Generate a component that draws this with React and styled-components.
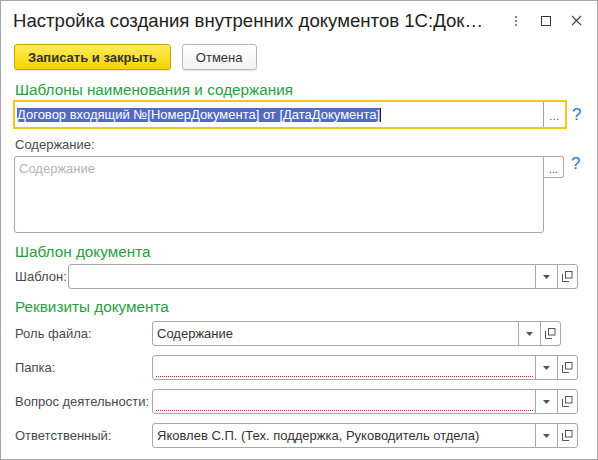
import React from 'react'
import styled, { createGlobalStyle } from 'styled-components'

const GlobalStyle = createGlobalStyle`
	html, body {
		margin: 0;
		padding: 0;
		background: #fff;
	}
	body {
		font-family: "Liberation Sans", Arial, sans-serif;
		font-size: 13px;
		color: #333;
	}
	* {
		box-sizing: border-box;
	}
`

const Window = styled.div`
	width: 598px;
	height: 460px;
	border: 1px solid #a5a5a5;
	background: #fff;
	display: flex;
	flex-direction: column;
	overflow: hidden;
`

const TitleBar = styled.div`
	height: 39px;
	display: flex;
	align-items: center;
	padding: 0 0 0 12px;
`

const Title = styled.div`
	flex: 1;
	font-size: 18.6px;
	color: #222;
	white-space: nowrap;
	padding-top: 1px;
`

const TitleButton = styled.div`
	width: 30px;
	height: 30px;
	display: flex;
	align-items: center;
	justify-content: center;
	color: #555;
`

const Toolbar = styled.div`
	display: flex;
	gap: 11px;
	padding: 4px 0 0 13px;
`

const Button = styled.button`
	height: 26px;
	padding: 0 13px;
	border-radius: 3px;
	font-family: inherit;
	font-size: 13px;
	font-weight: ${p => (p.$primary ? 'bold' : 'normal')};
	color: #333;
	border: 1px solid ${p => (p.$primary ? '#c9a400' : '#b8b8b8')};
	background: ${p =>
		p.$primary
			? 'linear-gradient(to bottom, #ffec5c, #f6d400)'
			: 'linear-gradient(to bottom, #ffffff, #f2f2f2)'};
	box-shadow: 0 1px 1px rgba(0, 0, 0, 0.12);
`

const Content = styled.div`
	padding: 0 0 0 13px;
	display: flex;
	flex-direction: column;
`

const Heading = styled.div`
	font-size: 15.3px;
	line-height: 20px;
	color: #27a040;
	margin-top: ${p => p.$top}px;
	padding-left: 1px;
`

const Line = styled.div`
	display: flex;
	align-items: ${p => (p.$top ? 'flex-start' : 'center')};
	margin-top: ${p => p.$mt || 0}px;
`

const FocusBox = styled.div`
	width: 554px;
	height: 29px;
	margin-left: -1px;
	border: 2px solid #f5c518;
	display: flex;
	align-items: stretch;
`

const InputText = styled.div`
	flex: 1;
	display: flex;
	align-items: center;
	padding-left: 2px;
	white-space: nowrap;
	overflow: hidden;
`

const Selected = styled.span`
	background: #5468c6;
	color: #fff;
	line-height: 14px;
	border-right: 1px solid #222;
`

const DotsButton = styled.div`
	width: ${p => p.$w}px;
	display: flex;
	align-items: center;
	justify-content: center;
	color: #444;
	font-size: 11px;
	letter-spacing: 0.5px;
	border-left: 1px solid #a0a0a0;
	padding-top: 3px;
`

const Help = styled.div`
	color: #2478c4;
	font-size: 17px;
	margin-left: ${p => p.$ml}px;
	margin-top: ${p => p.$mt || 0}px;
`

const Label = styled.div`
	width: ${p => p.$w}px;
	line-height: 16px;
	color: #4a4a4a;
	padding-left: 1px;
	white-space: nowrap;
`

const TextArea = styled.div`
	width: 530px;
	height: 77px;
	border: 1px solid #a8a8a8;
	border-radius: 3px 0 3px 3px;
	padding: 5px 4px;
	color: #b4b4b4;
	line-height: 14px;
`

const SideButton = styled.div`
	width: 20px;
	height: 22px;
	border: 1px solid #a8a8a8;
	border-left: none;
	border-radius: 0 3px 3px 0;
	display: flex;
	align-items: center;
	justify-content: center;
	color: #444;
	font-size: 11px;
	padding-top: 3px;
`

const Field = styled.div`
	width: ${p => p.$w}px;
	height: 25px;
	border: 1px solid #a8a8a8;
	border-radius: 3px;
	display: flex;
	align-items: stretch;
	background: #fff;
`

const FieldValue = styled.div`
	flex: 1;
	display: flex;
	align-items: center;
	padding: 0 4px;
	color: #333;
	white-space: nowrap;
	overflow: hidden;
	position: relative;
	&::after {
		content: '';
		display: ${p => (p.$required ? 'block' : 'none')};
		position: absolute;
		left: 3px;
		right: 2px;
		bottom: 2px;
		border-bottom: 1px dotted #d22;
	}
`

const FieldButton = styled.div`
	width: ${p => p.$w}px;
	border-left: 1px solid #a8a8a8;
	display: flex;
	align-items: center;
	justify-content: center;
`

const Rows = styled.div`
	display: flex;
	flex-direction: column;
	gap: 9px;
	margin-top: 4px;
`

const DotsIcon = () => (
	<svg width="4" height="12" viewBox="0 0 4 12">
		<circle cx="2" cy="2" r="1.2" fill="#888" />
		<circle cx="2" cy="6" r="1.2" fill="#888" />
		<circle cx="2" cy="10" r="1.2" fill="#888" />
	</svg>
)

const MaxIcon = () => (
	<svg width="10" height="10" viewBox="0 0 10 10">
		<rect x="0.5" y="0.5" width="9" height="9" fill="none" stroke="#333" strokeWidth="1" />
	</svg>
)

const CloseIcon = () => (
	<svg width="11" height="11" viewBox="0 0 11 11">
		<path d="M1 1 L10 10 M10 1 L1 10" stroke="#444" strokeWidth="1.1" />
	</svg>
)

const ArrowIcon = () => (
	<svg width="7" height="4" viewBox="0 0 7 4">
		<path d="M0 0 H7 L3.5 4 Z" fill="#555" />
	</svg>
)

const OpenIcon = () => (
	<svg width="11" height="11" viewBox="0 0 11 11">
		<path d="M0.5 3 V10.5 H7" fill="none" stroke="#555" strokeWidth="1" />
		<rect x="3.5" y="0.5" width="6.5" height="6.5" fill="none" stroke="#555" strokeWidth="1" />
	</svg>
)

const SelectField = ({ width, value, required }) => (
	<Field $w={width}>
		<FieldValue $required={required}>{value}</FieldValue>
		<FieldButton $w={22}>
			<ArrowIcon />
		</FieldButton>
		<FieldButton $w={20}>
			<OpenIcon />
		</FieldButton>
	</Field>
)

const details = [
	{ label: 'Роль файла:', value: 'Содержание', width: 409 },
	{ label: 'Папка:', value: '', width: 426, required: true },
	{ label: 'Вопрос деятельности:', value: '', width: 426, required: true },
	{ label: 'Ответственный:', value: 'Яковлев С.П. (Тех. поддержка, Руководитель отдела)', width: 426 }
]

const App = () => {
	return (
		<>
			<GlobalStyle />
			<Window>
				<TitleBar>
					<Title>Настройка создания внутренних документов 1С:Док…</Title>
					<TitleButton>
						<DotsIcon />
					</TitleButton>
					<TitleButton>
						<MaxIcon />
					</TitleButton>
					<TitleButton style={{ marginRight: 6 }}>
						<CloseIcon />
					</TitleButton>
				</TitleBar>
				<Toolbar>
					<Button $primary>Записать и закрыть</Button>
					<Button>Отмена</Button>
				</Toolbar>
				<Content>
					<Heading $top={10}>Шаблоны наименования и содержания</Heading>
					<Line>
						<FocusBox>
							<InputText>
								<Selected>Договор входящий №[НомерДокумента] от [ДатаДокумента]</Selected>
							</InputText>
							<DotsButton $w={22}>...</DotsButton>
						</FocusBox>
						<Help $ml={5}>?</Help>
					</Line>
					<Line $mt={8}>
						<Label>Содержание:</Label>
					</Line>
					<Line $mt={3} $top>
						<TextArea>Содержание</TextArea>
						<SideButton>...</SideButton>
						<Help $ml={7} $mt={-2}>?</Help>
					</Line>
					<Heading $top={9}>Шаблон документа</Heading>
					<Line $mt={2}>
						<Label $w={54}>Шаблон:</Label>
						<SelectField width={510} value="" />
					</Line>
					<Heading $top={8}>Реквизиты документа</Heading>
					<Rows>
						{details.map(d => (
							<Line key={d.label}>
								<Label $w={138}>{d.label}</Label>
								<SelectField width={d.width} value={d.value} required={d.required} />
							</Line>
						))}
					</Rows>
				</Content>
			</Window>
		</>
	)
}

export default App
